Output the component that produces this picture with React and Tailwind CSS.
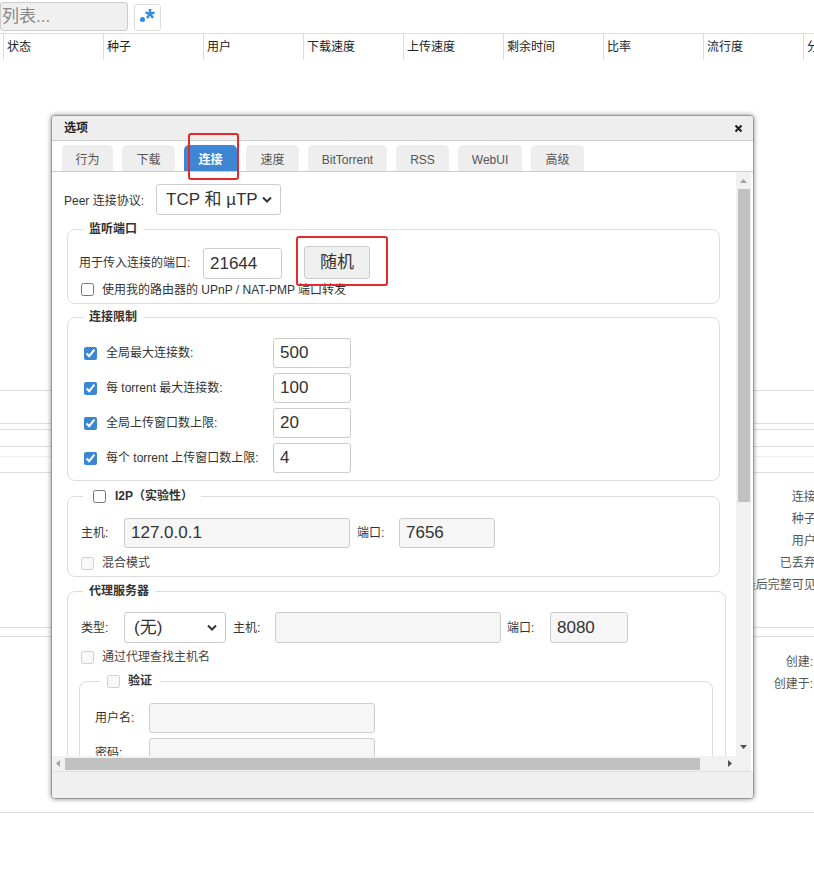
import React from "react";

const Chevron = () => (
  <svg width="10" height="7" viewBox="0 0 10 7" className="shrink-0">
    <path d="M1 1.5 L5 5.5 L9 1.5" fill="none" stroke="#333" strokeWidth="2" />
  </svg>
);

const Box = ({ w, value, disabled }) => (
  <div
    className={`${w} h-[30px] border border-[#ccc] rounded-[3px] pl-[6px] flex items-center text-[17px] text-[#333] ${
      disabled ? "bg-[#f6f6f6]" : "bg-white"
    }`}
  >
    {value}
  </div>
);

const Check = ({ checked, disabled }) => (
  <input
    type="checkbox"
    readOnly
    checked={!!checked}
    disabled={!!disabled}
    className="w-[13px] h-[13px] accent-[#3a86d4] shrink-0"
  />
);

const tabs = [
  ["行为", "w-[51px]"],
  ["下载", "w-[53px]"],
  ["连接", "w-[53px]"],
  ["速度", "w-[53px]"],
  ["BitTorrent", "w-[79px]"],
  ["RSS", "w-[53px]"],
  ["WebUI", "w-[64px]"],
  ["高级", "w-[53px]"],
];

const cols = ["状态", "种子", "用户", "下载速度", "上传速度", "剩余时间", "比率", "流行度", "分享"];

const limits = [
  ["全局最大连接数:", "500"],
  ["每 torrent 最大连接数:", "100"],
  ["全局上传窗口数上限:", "20"],
  ["每个 torrent 上传窗口数上限:", "4"],
];

export default function App() {
  return (
    <div className="relative w-[814px] h-[877px] overflow-hidden bg-white text-[12px] text-[#333] font-['Liberation_Sans','Noto_Sans_CJK_SC',sans-serif]">
      {/* page behind the dialog */}
      <div className="flex items-start h-[33px]">
        <div className="mt-[2px] w-[128px] h-[29px] bg-[#f0f0f0] border border-[#ccc] rounded-[3px] pl-[1px] flex items-center text-[17px] text-[#888]">
          列表...
        </div>
        <div className="ml-[6px] mt-[4px] w-[27px] h-[27px] border border-[#ddd] rounded-[3px] relative text-[#2b8ce6] font-bold">
          <span className="absolute left-[5px] top-[12px] w-[5px] h-[5px] rounded-full bg-[#2b8ce6]" />
          <span className="absolute left-[10px] top-[1px] text-[25px] leading-none">*</span>
        </div>
      </div>
      <div className="flex pl-[3px] h-[27px] border-t border-[#ddd] w-[1000px]">
        {cols.map((c) => (
          <div key={c} className="w-[100px] shrink-0 border-l border-[#ddd] pl-[3px] pt-[4px] text-[#222]">
            {c}
          </div>
        ))}
      </div>
      <div className="h-[330px]" />
      <div className="h-[33px] border-t border-[#ddd]" />
      <div className="h-[6px] border-t border-[#ddd]" />
      <div className="h-[17px] border-t border-[#ddd]" />
      <div className="h-[10px] border-t border-[#ddd]" />
      <div className="h-[16px] border-t border-[#eee]" />
      <div className="h-[155px] border-t border-[#ddd] pt-[15px]">
        {["连接:", "种子:", "用户:", "已丢弃:", "最后完整可见:"].map((t) => (
          <div key={t} className="ml-[700px] w-[119px] h-[22px] text-right text-[#555]">
            {t}
          </div>
        ))}
      </div>
      <div className="h-[9px] border-t border-[#ddd]" />
      <div className="h-[176px] border-t border-[#ddd] pt-[16px]">
        {["创建:", "创建于:"].map((t) => (
          <div key={t} className="ml-[700px] w-[113px] h-[22px] text-right text-[#555]">
            {t}
          </div>
        ))}
      </div>
      <div className="border-t border-[#ddd]" />

      {/* options dialog */}
      <div className="absolute left-[51px] top-[115px] w-[703px] h-[684px] bg-white border border-[#999] rounded-[4px] shadow-[0_0_5px_rgba(0,0,0,0.45)] flex flex-col overflow-hidden">
        <div className="h-[25px] shrink-0 bg-[#eee] border-b border-[#ccc] flex items-center pl-[12px] pr-[8px] font-semibold text-[#222]">
          <span>选项</span>
          <svg width="9" height="9" viewBox="0 0 9 9" className="ml-auto mr-[2px]">
            <path d="M1.5 1.5 L7.5 7.5 M7.5 1.5 L1.5 7.5" stroke="#222" strokeWidth="2.2" />
          </svg>
        </div>
        <div className="h-[31px] shrink-0 border-b border-[#ccc] flex items-end gap-[9px] pl-[10px]">
          {tabs.map(([t, w]) =>
            t === "连接" ? (
              <div key={t} className={`${w} h-[26px] pt-[3px] rounded-t-[5px] bg-[#3d86d4] text-white font-bold flex items-center justify-center`}>
                {t}
              </div>
            ) : (
              <div key={t} className={`${w} h-[26px] pt-[3px] rounded-t-[5px] bg-[#eee] text-[#555] flex items-center justify-center`}>
                {t}
              </div>
            )
          )}
        </div>

        <div className="flex h-[584px] shrink-0">
          <div className="w-[684px] h-[584px] overflow-hidden">
            <div className="pt-[12px]">
              {/* protocol */}
              <div className="flex items-center pl-[12px]">
                <span className="w-[92px] pt-[2px]">Peer 连接协议:</span>
                <div className="w-[125px] h-[31px] border border-[#ccc] rounded-[3px] flex items-center pl-[9px] pr-[8px] text-[17px]">
                  <span className="pt-[1px]">TCP 和 µTP</span>
                  <span className="ml-auto"><Chevron /></span>
                </div>
              </div>

              {/* listening port */}
              <fieldset className="mt-[5px] ml-[15px] w-[653px] border border-[#ddd] rounded-[8px] px-[12px] pb-[6px]">
                <legend className="ml-[3px] px-[6px] font-bold leading-[18px]">监听端口</legend>
                <div className="flex items-end mt-[8px]">
                  <span className="w-[124px] -ml-[1px] self-center">用于传入连接的端口:</span>
                  <Box w="w-[79px] h-[31px]" value="21644" />
                  <div className="ml-[22px] w-[66px] h-[33px] bg-[#efefef] border border-[#ccc] rounded-[3px] flex items-center justify-center text-[17px]">
                    随机
                  </div>
                </div>
                <div className="flex items-center gap-[8px] mt-[3px] pl-[1px] h-[15px]">
                  <Check />
                  <span>使用我的路由器的 UPnP / NAT-PMP 端口转发</span>
                </div>
              </fieldset>

              {/* connection limits */}
              <fieldset className="mt-[4px] ml-[15px] w-[653px] border border-[#ddd] rounded-[8px] px-[12px] pb-[7px]">
                <legend className="ml-[3px] px-[6px] font-bold leading-[18px]">连接限制</legend>
                <div className="mt-[12px] flex flex-col gap-[5px]">
                  {limits.map(([l, v]) => (
                    <div key={l} className="flex items-center pl-[4px]">
                      <Check checked />
                      <span className="ml-[9px] w-[167px]">{l}</span>
                      <Box w="w-[78px]" value={v} />
                    </div>
                  ))}
                </div>
              </fieldset>

              {/* I2P */}
              <fieldset className="mt-[6px] ml-[15px] w-[653px] border border-[#ddd] rounded-[8px] px-[12px] pb-[6px]">
                <legend className="ml-[3px] px-[6px] font-bold leading-[18px]">
                  <span className="flex items-center gap-[9px] ml-[4px] pr-[2px]">
                    <Check />
                    <span>I2P（实验性）</span>
                  </span>
                </legend>
                <div className="mt-[13px] flex items-center pl-[1px]">
                  <span className="w-[43px]">主机:</span>
                  <Box w="w-[226px]" value="127.0.0.1" disabled />
                  <span className="ml-[7px] w-[42px]">端口:</span>
                  <Box w="w-[96px]" value="7656" disabled />
                </div>
                <div className="flex items-center gap-[8px] mt-[8px] pl-[1px] h-[14px] text-[#444]">
                  <Check disabled />
                  <span>混合模式</span>
                </div>
              </fieldset>

              {/* proxy */}
              <fieldset className="mt-[5px] ml-[15px] w-[653px] border border-[#ddd] rounded-[8px] px-[12px] pb-[6px]">
                <legend className="ml-[3px] px-[6px] font-bold leading-[18px]">代理服务器</legend>
                <div className="mt-[12px] flex items-center pl-[1px]">
                  <span className="w-[43px]">类型:</span>
                  <div className="w-[102px] h-[31px] border border-[#ccc] rounded-[3px] flex items-center pl-[9px] pr-[8px] text-[17px]">
                    <span>(无)</span>
                    <span className="ml-auto"><Chevron /></span>
                  </div>
                  <span className="ml-[7px] w-[42px]">主机:</span>
                  <Box w="w-[226px] h-[31px]" value="" disabled />
                  <span className="ml-[6px] w-[43px]">端口:</span>
                  <Box w="w-[78px] h-[31px]" value="8080" disabled />
                </div>
                <div className="flex items-center gap-[8px] mt-[7px] pl-[1px] h-[14px] text-[#444]">
                  <Check disabled />
                  <span>通过代理查找主机名</span>
                </div>
                <fieldset className="mt-[8px] -ml-[1px] w-[634px] border border-[#ddd] rounded-[8px] px-[12px] pb-[10px]">
                  <legend className="ml-[9px] px-[6px] leading-[18px]">
                    <span className="flex items-center gap-[8px] pr-[2px] font-bold">
                      <Check disabled />
                      <span>验证</span>
                    </span>
                  </legend>
                  <div className="mt-[13px] flex flex-col gap-[5px]">
                    {["用户名:", "密码:"].map((l) => (
                      <div key={l} className="flex items-center pl-[3px]">
                        <span className="w-[54px]">{l}</span>
                        <Box w="w-[226px]" value="" disabled />
                      </div>
                    ))}
                  </div>
                </fieldset>
              </fieldset>
            </div>
          </div>
          {/* vertical scrollbar */}
          <div className="w-[15px] h-[584px] bg-[#f1f1f1] flex flex-col items-center">
            <svg width="15" height="17" viewBox="0 0 15 17">
              <path d="M4 11 L7.5 7 L11 11 Z" fill="#a3a3a3" />
            </svg>
            <div className="w-[12px] h-[313px] bg-[#c1c1c1]" />
            <div className="flex-1" />
            <svg width="15" height="17" viewBox="0 0 15 17">
              <path d="M4 6 L7.5 10 L11 6 Z" fill="#505050" />
            </svg>
          </div>
        </div>
        {/* horizontal scrollbar */}
        <div className="flex h-[15px] shrink-0">
          <div className="w-[684px] bg-[#f1f1f1] flex items-center">
            <svg width="13" height="15" viewBox="0 0 13 15">
              <path d="M8 4 L4 7.5 L8 11 Z" fill="#a3a3a3" />
            </svg>
            <div className="h-[12px] w-[635px] bg-[#c1c1c1]" />
            <div className="flex-1" />
            <svg width="13" height="15" viewBox="0 0 13 15">
              <path d="M5 4 L9 7.5 L5 11 Z" fill="#505050" />
            </svg>
          </div>
          <div className="w-[15px] bg-[#f1f1f1]" />
        </div>
        <div className="flex-1 bg-[#f0f0f0] border-t border-[#e0e0e0]" />
      </div>

      {/* red annotation boxes */}
      <div className="absolute left-[188px] top-[133px] w-[51px] h-[47px] border-2 border-[#e5282a] rounded-[3px]" />
      <div className="absolute left-[296px] top-[236px] w-[92px] h-[50px] border-2 border-[#e5282a] rounded-[3px]" />
    </div>
  );
}
